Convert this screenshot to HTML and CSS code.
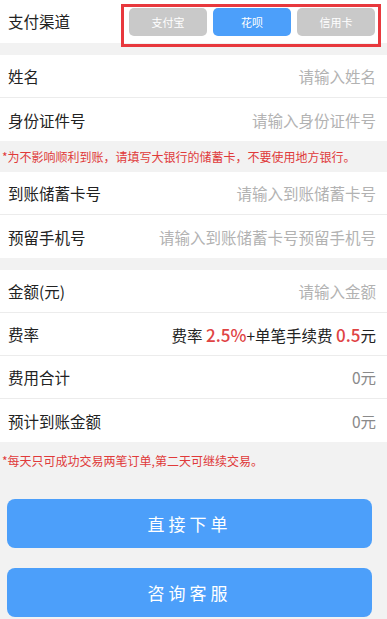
FILE: index.html
```html
<!DOCTYPE html>
<html lang="zh-CN">
<head>
    <meta charset="UTF-8">
    <meta name="viewport" content="width=device-width, initial-scale=1.0">
    <title>提交订单</title>
    <link rel="stylesheet" href="styles.css">
</head>
<body>
    <div class="page">
        <!-- 支付渠道 -->
        <div class="row row-channel">
            <span class="label">支付渠道</span>
            <div class="channel-box">
                <button type="button" class="seg">支付宝</button>
                <button type="button" class="seg active">花呗</button>
                <button type="button" class="seg">信用卡</button>
            </div>
        </div>

        <div class="gap"></div>

        <div class="group">
            <div class="row">
                <label class="label" for="txtName">姓名</label>
                <input id="txtName" class="field" type="text" placeholder="请输入姓名">
            </div>
            <div class="row">
                <label class="label" for="txtIdCard">身份证件号</label>
                <input id="txtIdCard" class="field" type="text" placeholder="请输入身份证件号">
            </div>
        </div>

        <p class="notice notice-top">*为不影响顺利到账，请填写大银行的储蓄卡，不要使用地方银行。</p>

        <div class="group">
            <div class="row">
                <label class="label" for="txtCard">到账储蓄卡号</label>
                <input id="txtCard" class="field" type="text" placeholder="请输入到账储蓄卡号">
            </div>
            <div class="row">
                <label class="label" for="txtPhone">预留手机号</label>
                <input id="txtPhone" class="field" type="text" placeholder="请输入到账储蓄卡号预留手机号">
            </div>
        </div>

        <div class="gap"></div>

        <div class="group">
            <div class="row">
                <label class="label" for="txtAmount">金额(元)</label>
                <input id="txtAmount" class="field" type="text" placeholder="请输入金额">
            </div>
            <div class="row">
                <span class="label">费率</span>
                <span class="rate">费率 <em>2.5%</em>+单笔手续费 <em>0.5</em>元</span>
            </div>
            <div class="row">
                <span class="label">费用合计</span>
                <span class="value">0元</span>
            </div>
            <div class="row">
                <span class="label">预计到账金额</span>
                <span class="value">0元</span>
            </div>
        </div>

        <p class="notice notice-bottom">*每天只可成功交易两笔订单,第二天可继续交易。</p>

        <div class="actions">
            <button type="button" class="btn">直接下单</button>
            <button type="button" class="btn">咨询客服</button>
        </div>
    </div>
</body>
</html>
```

FILE: styles.css
```css
body {
    margin: 0;
    font-family: "Noto Sans CJK SC", "Liberation Sans", sans-serif;
    background-color: #f2f2f2;
    color: #222;
}

.page {
    background-color: #f2f2f2;
}

.gap {
    height: 12px;
}

.group {
    background-color: #fff;
}

.row {
    box-sizing: border-box;
    display: flex;
    align-items: center;
    justify-content: space-between;
    height: 43px;
    padding: 0 11px 0 8px;
    border-bottom: 1px solid #ececec;
    background-color: #fff;
}

.group .row:last-child {
    border-bottom: none;
}

.label {
    font-size: 15.5px;
    color: #222;
    white-space: nowrap;
}

.field {
    flex: 1;
    min-width: 0;
    margin-left: 10px;
    padding: 0;
    border: none;
    outline: none;
    background: transparent;
    font-family: inherit;
    font-size: 15.5px;
    color: #222;
    text-align: right;
}

.field::placeholder {
    color: #b2b2b2;
}

/* 支付渠道 */
.row-channel {
    align-items: flex-start;
    border-bottom: none;
    padding-right: 6px;
    position: relative;
    z-index: 1;
}

.row-channel .label {
    line-height: 43px;
}

.channel-box {
    box-sizing: border-box;
    display: flex;
    gap: 6px;
    width: 260px;
    height: 43px;
    margin-top: 4px;
    padding: 1px 3px 0 5px;
    border: 3px solid #e8383d;
}

.seg {
    width: 78px;
    height: 28px;
    margin: 0;
    padding: 0;
    border: none;
    border-radius: 5px;
    background-color: #c9c9c9;
    color: #fff;
    font-family: inherit;
    font-size: 11px;
}

.seg.active {
    background-color: #4c9ffa;
}

.rate {
    font-size: 15.5px;
    color: #222;
}

.rate em {
    font-style: normal;
    font-size: 17px;
    font-weight: 500;
    color: #e04444;
}

.value {
    font-size: 15.5px;
    color: #8a8a8a;
}

.notice {
    margin: 0;
    padding: 0 2px;
    font-size: 12px;
    color: #e03a3a;
}

.notice-top {
    line-height: 31px;
}

.notice-bottom {
    padding-top: 10px;
    line-height: 17px;
}

.actions {
    display: flex;
    flex-direction: column;
    gap: 20px;
    padding: 30px 15px 0 7px;
}

.btn {
    height: 49px;
    margin: 0;
    border: none;
    border-radius: 8px;
    background-color: #4c9ffa;
    color: #fff;
    font-family: inherit;
    font-size: 17px;
    letter-spacing: 4px;
}
```
